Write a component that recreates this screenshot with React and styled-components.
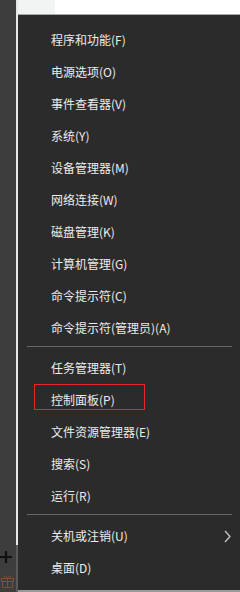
import styled, { createGlobalStyle } from "styled-components";

const GlobalStyle = createGlobalStyle`
    html, body {
        margin: 0;
        padding: 0;
        background: #ffffff;
    }
    body {
        width: 240px;
        height: 592px;
        overflow: hidden;
        font-family: "Noto Sans CJK SC", "Noto Sans", sans-serif;
    }
`;

const Screen = styled.div`
    display: flex;
    width: 240px;
    height: 592px;
`;

const SideStrip = styled.div`
    width: 16px;
    background: #3d3d3d;
    display: flex;
    flex-direction: column;
    align-items: center;
    justify-content: flex-end;
    gap: 10px;
    padding-bottom: 4px;
    box-sizing: border-box;
`;

const DividerLine = styled.div`
    width: 2px;
    background: linear-gradient(#e6e6e6 0 545px, #5a5a5a 545px);
`;

const Main = styled.div`
    flex: 1;
    display: flex;
    flex-direction: column;
`;

const TopBar = styled.div`
    height: 14px;
    display: flex;
    background: #ffffff;
`;

const Tab = styled.div`
    width: 37px;
    background: #f2f3f3;
`;

const Menu = styled.div`
    flex: 1;
    background: #2b2b2b;
    border-top: 1px solid #a9a9a9;
    border-bottom: 2px solid #9a9a9a;
    padding: 9px 0 6px;
    display: flex;
    flex-direction: column;
`;

const Item = styled.div`
    position: relative;
    height: 32px;
    display: flex;
    align-items: center;
    justify-content: space-between;
    padding: 0 9px 0 33px;
    color: #ececec;
    font-size: 12px;
    line-height: 1;
    white-space: nowrap;
`;

const Separator = styled.div`
    height: 1px;
    margin: 2px 8px 5px 9px;
    background: #666666;
`;

const Highlight = styled.div`
    position: absolute;
    left: 16px;
    top: 0;
    width: 109px;
    height: 24px;
    border: 1px solid #e8262b;
`;

const Chevron = () => (
    <svg width="7" height="13" viewBox="0 0 7 13">
        <polyline points="1,1 6,6.5 1,12" fill="none" stroke="#c8c8c8" strokeWidth="1.3" />
    </svg>
);

const PlusIcon = () => (
    <svg width="14" height="12" viewBox="0 0 14 12" style={{ marginLeft: -4 }}>
        <path d="M7 0V12M1 6H13" stroke="#111111" strokeWidth="2.2" />
    </svg>
);

const GiftIcon = () => (
    <svg width="15" height="15" viewBox="0 0 15 15" style={{ marginLeft: -2 }}>
        <g fill="none" stroke="#7a4e38" strokeWidth="1">
            <rect x="1.5" y="5.5" width="12" height="3" />
            <rect x="2.5" y="8.5" width="10" height="6" />
            <path d="M7.5 5.5V14.5M7.5 5.5C6 2 3.5 2.5 4.5 4.5M7.5 5.5C9 2 11.5 2.5 10.5 4.5" />
        </g>
    </svg>
);

const groups = [
    [
        "程序和功能(F)",
        "电源选项(O)",
        "事件查看器(V)",
        "系统(Y)",
        "设备管理器(M)",
        "网络连接(W)",
        "磁盘管理(K)",
        "计算机管理(G)",
        "命令提示符(C)",
        "命令提示符(管理员)(A)",
    ],
    ["任务管理器(T)", "控制面板(P)", "文件资源管理器(E)", "搜索(S)", "运行(R)"],
    ["关机或注销(U)", "桌面(D)"],
];

export default function App() {
    return (
        <Screen>
            <GlobalStyle />
            <SideStrip>
                <PlusIcon />
                <GiftIcon />
            </SideStrip>
            <DividerLine />
            <Main>
                <TopBar>
                    <Tab />
                </TopBar>
                <Menu>
                    {groups.map((group, gi) => (
                        <div key={gi}>
                            {gi > 0 && <Separator />}
                            {group.map((label) => (
                                <Item key={label}>
                                    <span>{label}</span>
                                    {label === "关机或注销(U)" && <Chevron />}
                                    {label === "控制面板(P)" && <Highlight />}
                                </Item>
                            ))}
                        </div>
                    ))}
                </Menu>
            </Main>
        </Screen>
    );
}
